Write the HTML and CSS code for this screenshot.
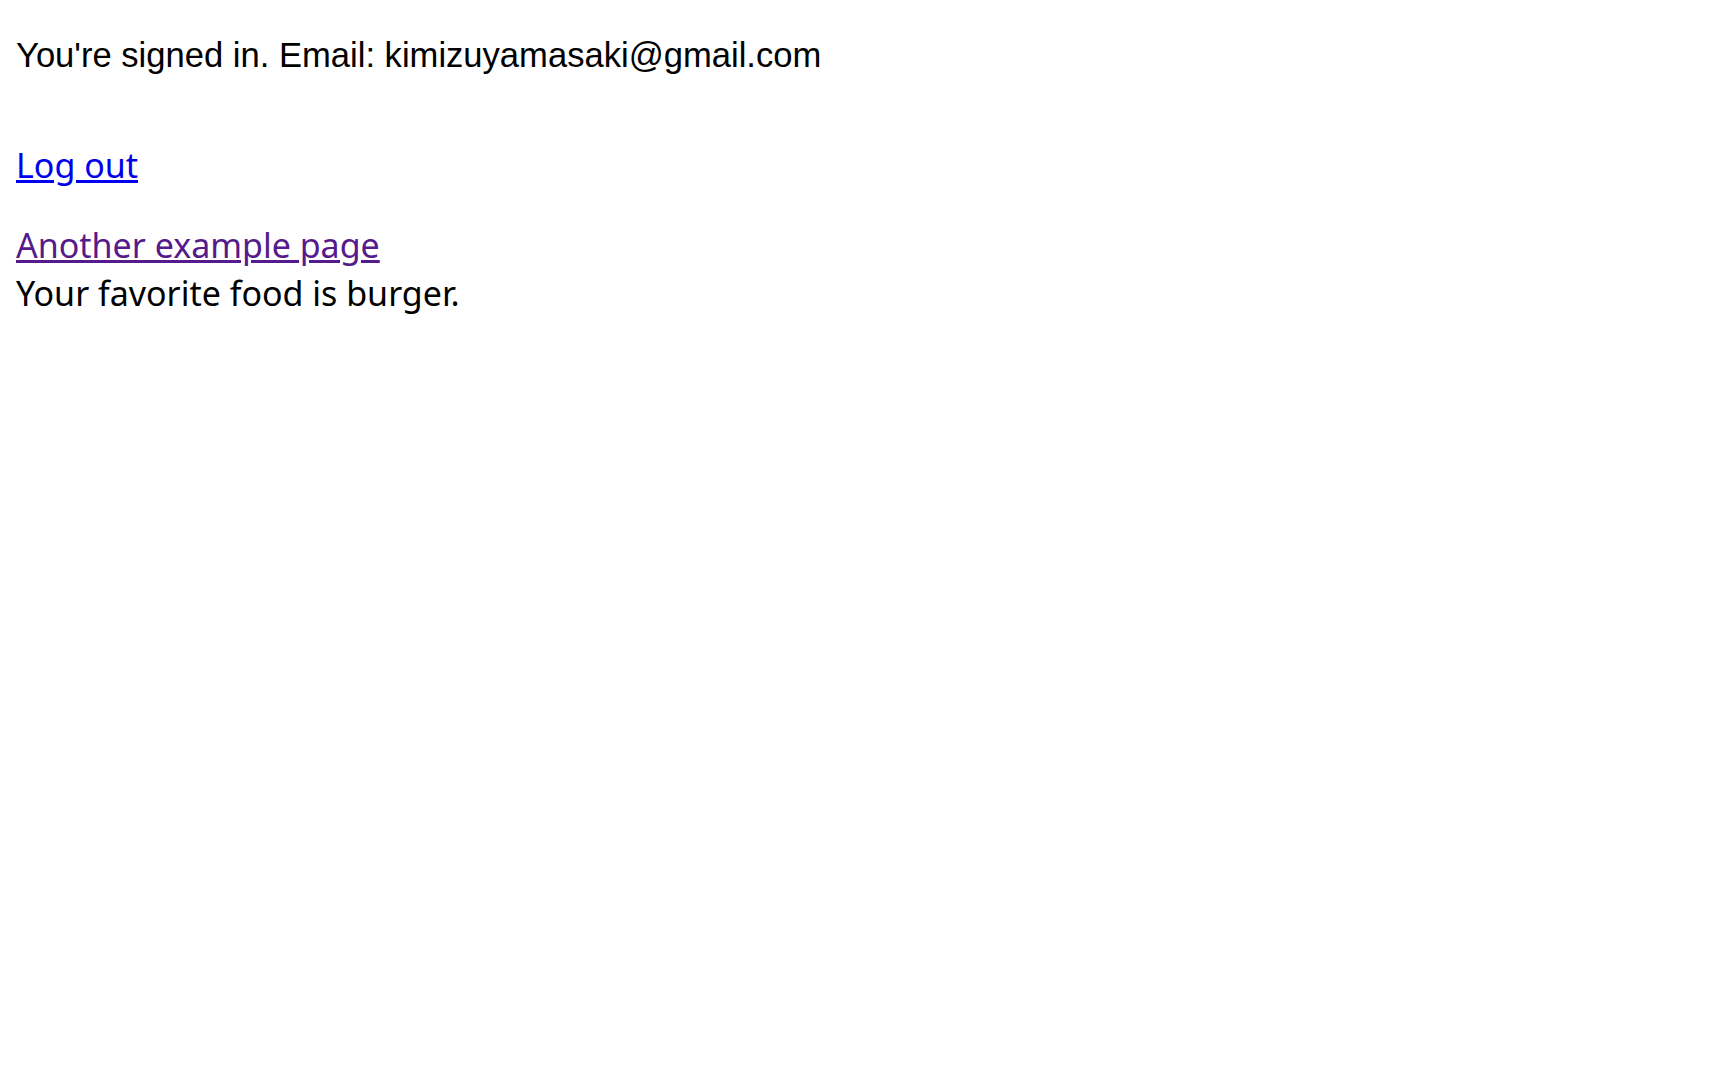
FILE: index.html
```html
<!DOCTYPE html>
<html lang="en">
<head>
<meta charset="utf-8">
<title>Signed in</title>
<link rel="stylesheet" href="styles.css">
</head>
<body>
<p class="status">You're signed in. Email: kimizuyamasaki@gmail.com</p>
<div class="content">
  <p class="logout-row"><a class="link" href="#logout">Log out</a></p>
  <div class="nav-row"><a class="link visited" href="#another">Another example page</a></div>
  <div class="food">Your favorite food is burger.</div>
</div>
</body>
</html>
```

FILE: styles.css
```css
html, body {
  background: #ffffff;
}
body {
  margin: 0;
  padding: 16px;
  color: #000000;
}
.status {
  font-family: "Liberation Sans", Arial, sans-serif;
  font-size: 34.6px;
  line-height: 40px;
  margin: 19px 0 0 0;
}
.content {
  font-family: "Noto Sans", sans-serif;
  font-size: 34px;
  line-height: 50px;
}
.logout-row {
  margin: 65px 0 30px 0;
}
.food {
  line-height: 46px;
}
.link {
  color: #0000ee;
  text-decoration: underline;
}
.link.visited {
  color: #551a8b;
}
```
